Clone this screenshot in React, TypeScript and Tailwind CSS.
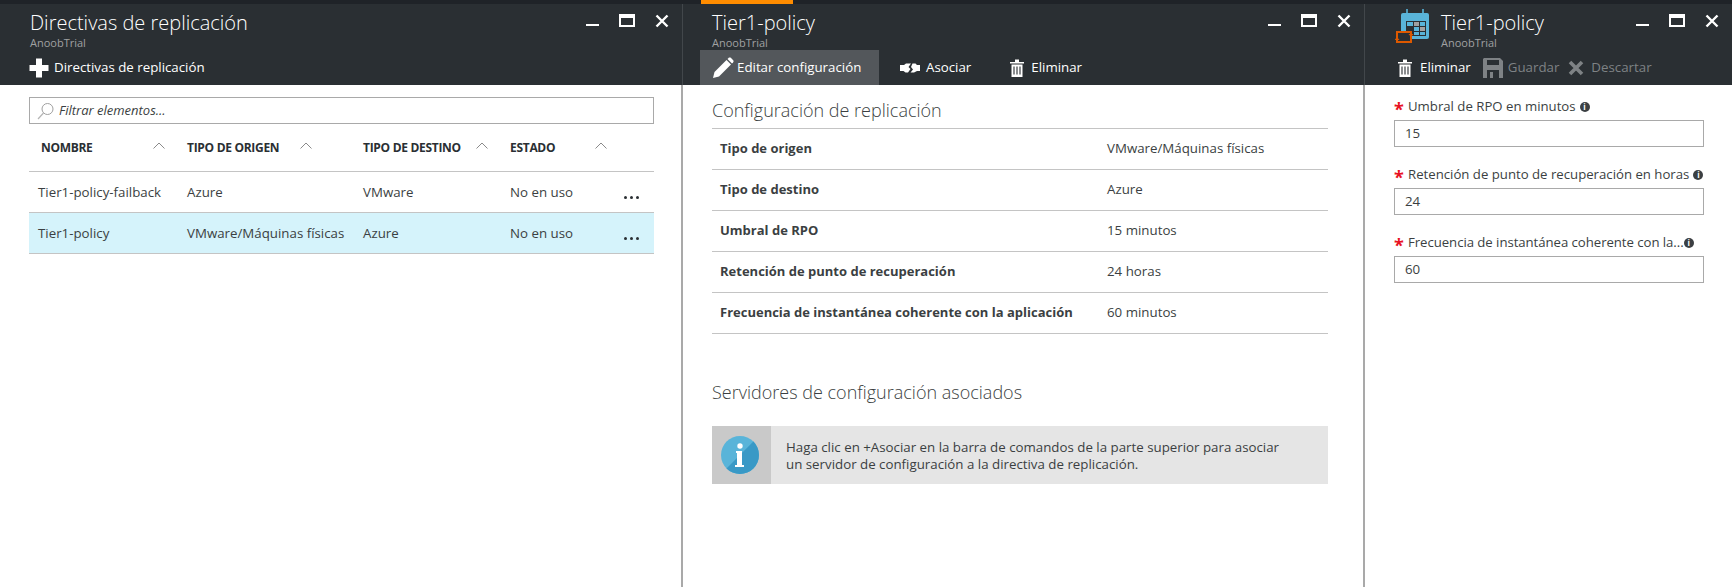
import React from "react";

const font = { fontFamily: '"Open Sans", "Noto Sans", sans-serif' };

const Minimize = () => <div className="w-[13px] h-[2px] bg-white mt-[10px]" />;
const Maximize = () => <div className="w-[16px] h-[13px] border-2 border-t-[4px] border-white" />;
const Close = () => (
  <svg width="14" height="14" viewBox="0 0 14 14">
    <path d="M1.500 1.500 L12.500 12.500 M12.500 1.500 L1.500 12.500" stroke="white" strokeWidth="2.400" fill="none" />
  </svg>
);

const WindowControls = ({ className }: { className: string }) => (
  <div className={"flex items-start gap-[20px] " + className}>
    <Minimize />
    <Maximize />
    <Close />
  </div>
);

const Plus = () => (
  <svg width="22" height="22" viewBox="0 0 22 22">
    <path d="M8 1.500h6V8h6.500v6H14v6.500H8V14H1.500V8H8z" fill="white" />
  </svg>
);

const Pencil = () => (
  <svg width="22" height="22" viewBox="0 0 22 22">
    <path d="M1 21l1.500-6L14.500 3l4.500 4.500L7 19.500z" fill="white" />
    <path d="M15.500 2l1.300-1.200c.6-.5 1.400-.5 2 0l2.400 2.400c.5.6.5 1.400 0 2L20 6.500z" fill="white" />
  </svg>
);

const Link = () => (
  <svg width="20" height="14" viewBox="0 0 20 14">
    <path d="M0 4h4l2-1.500h5L8.500 6l2 2 -2.500 3.500H5.500L3.500 10H0z" fill="white" />
    <path d="M12.500 2.500h3L17 4h3v6h-3l-3 1.500h-3.500L13 8.500 11 6z" fill="white" />
  </svg>
);

const Trash = () => (
  <svg width="14" height="18" viewBox="0 0 14 18">
    <path d="M0 3h14v1.500H0zM5 0.500h4V3H5z" fill="white" />
    <path d="M1.500 5.500h11V18h-11z" fill="white" />
    <path d="M4 7.500v8M7 7.500v8M10 7.500v8" stroke="#2a2f33" strokeWidth="1.100" />
  </svg>
);

const Save = () => (
  <svg width="20" height="20" viewBox="0 0 20 20">
    <path d="M1 0h16l3 3v17H0V1z" fill="#7e8285" />
    <path d="M4 2h12v5H4zM4 12h12v8H4z" fill="#2a2f33" />
    <path d="M7 14h3v6H7z" fill="#7e8285" />
  </svg>
);

const Discard = () => (
  <svg width="16" height="16" viewBox="0 0 16 16">
    <path d="M2 2 L14 14 M14 2 L2 14" stroke="#7e8285" strokeWidth="3.600" fill="none" />
  </svg>
);

const CalendarSync = () => (
  <svg width="36" height="36" viewBox="0 0 36 36">
    <rect x="6" y="4" width="28" height="26" rx="2" fill="#59b4d9" />
    <path d="M12 0v6M28 0v6" stroke="#59b4d9" strokeWidth="1.600" />
    <path d="M11 12h20v15H11z" fill="#2a2f33" />
    <path d="M12 13h6v4h-6z" fill="#59b4d9" />
    <path d="M19 13h5v4h-5z" fill="#a0a1a2" />
    <path d="M25 13h5v4h-5z" fill="#59b4d9" />
    <path d="M12 18h6v4h-6z" fill="#2a2f33" />
    <path d="M19 18h5v4h-5z" fill="#59b4d9" />
    <path d="M25 18h5v4h-5z" fill="#a0a1a2" />
    <path d="M19 23h5v3h-5z" fill="#59b4d9" />
    <path d="M25 23h5v3h-5z" fill="#59b4d9" />
    <path d="M2 23h14v10H2z" fill="#2a2f33" stroke="#dd5900" strokeWidth="2" />
    <path d="M16 28l2.500-3h-5zM2 28l-2.500 3h5z" fill="#dd5900" />
  </svg>
);

const SmallInfo = () => (
  <span className="w-[10px] h-[10px] rounded-full bg-[#3b3f42] text-white text-[8px] leading-[10px] font-bold text-center inline-block shrink-0">
    i
  </span>
);

const Command = ({
  icon,
  label,
  active,
  disabled,
  className,
}: {
  icon: React.ReactNode;
  label: string;
  active?: boolean;
  disabled?: boolean;
  className?: string;
}) => (
  <div
    className={
      "h-[35px] flex items-center text-[13.3px] " +
      (active ? "bg-[#53575b] " : "") +
      (disabled ? "text-[#7e8285] " : "text-white ") +
      (className || "")
    }
  >
    {icon}
    <span>{label}</span>
  </div>
);

const Header = ({
  title,
  icon,
  children,
  controls,
  width,
}: {
  title: string;
  icon?: React.ReactNode;
  children: React.ReactNode;
  controls: string;
  width: string;
}) => (
  <div className={"h-[81px] bg-[#2a2f33] shrink-0 flex flex-col " + width}>
    <div className="h-[46px] flex items-start">
      {icon}
      <div className="flex-1 pt-[5px]">
        <div className="text-[20px] leading-[27px] font-light text-white">{title}</div>
        <div className="text-[11px] leading-[14px] text-[#a0a1a2]">AnoobTrial</div>
      </div>
      <WindowControls className={controls} />
    </div>
    <div className="flex items-end flex-1">{children}</div>
  </div>
);

const rows = [
  ["Tier1-policy-failback", "Azure", "VMware", "No en uso"],
  ["Tier1-policy", "VMware/Máquinas físicas", "Azure", "No en uso"],
];

const details = [
  ["Tipo de origen", "VMware/Máquinas físicas"],
  ["Tipo de destino", "Azure"],
  ["Umbral de RPO", "15 minutos"],
  ["Retención de punto de recuperación", "24 horas"],
  ["Frecuencia de instantánea coherente con la aplicación", "60 minutos"],
];

const fields = [
  { label: "Umbral de RPO en minutos", value: "15", text: "mr-[4px]" },
  { label: "Retención de punto de recuperación en horas", value: "24", text: "mr-[4px]" },
  { label: "Frecuencia de instantánea coherente con la...", value: "60", text: "tracking-[-0.05px]" },
];

const columns = [
  { name: "NOMBRE", col: "w-[146px]", inner: "w-[124px]" },
  { name: "TIPO DE ORIGEN", col: "w-[176px]", inner: "w-[125px]" },
  { name: "TIPO DE DESTINO", col: "w-[147px]", inner: "w-[125px]" },
  { name: "ESTADO", col: "w-[110px]", inner: "w-[97px]" },
];

const Caret = () => (
  <svg width="12" height="7" viewBox="0 0 12 7" className="shrink-0 mb-[4px]">
    <path d="M0.500 6.500L6 1l5.500 5.500" stroke="#8a8a8a" fill="none" />
  </svg>
);

const App = () => {
  return (
    <div className="w-[1732px] h-[587px] overflow-hidden bg-white flex flex-col" style={font}>
      <div className="h-[4px] bg-[#1f2328] shrink-0 pl-[701px]">
        <div className="h-[4px] w-[92px] bg-[#ff8c00]" />
      </div>
      <div className="flex flex-1">
        {/* first blade */}
        <div className="w-[683px] shrink-0 flex flex-col">
          <Header title="Directivas de replicación" controls="pr-[13px] pt-[10px]" width="pl-[30px] pr-0 border-r border-[#42474b]">
            <Command icon={<Plus />} label="Directivas de replicación" className="gap-[4px] -ml-[2px]" />
          </Header>
          <div className="flex-1 border-r-2 border-[#a9a9a9] pl-[29px] pr-[27px] pt-[12px]">
            <div className="h-[27px] border border-[#a9a9a9] flex items-center pl-[7px] gap-[4px] text-[13px] italic text-[#3b3f42]">
              <svg width="18" height="18" viewBox="0 0 18 18">
                <circle cx="10.500" cy="7" r="5.500" stroke="#a0a0a0" fill="none" />
                <path d="M6.500 11L1 17" stroke="#b5b5b5" strokeWidth="1.200" />
              </svg>
              <span>Filtrar elementos...</span>
            </div>
            <div className="h-[48px] flex items-center pl-[12px] text-[12px] font-bold text-[#2a2f33] border-b border-[#c4c4c4]">
              {columns.map((c) => (
                <div key={c.name} className={"shrink-0 " + c.col}>
                  <div className={"flex items-center justify-between " + c.inner}>
                    <span className="whitespace-nowrap tracking-[-0.3px]">{c.name}</span>
                    <Caret />
                  </div>
                </div>
              ))}
            </div>
            {rows.map((r, i) => (
              <div
                key={r[0]}
                className={
                  "h-[41px] flex items-center pl-[9px] pt-[1px] text-[13.3px] text-[#3b3f42] border-b border-[#c4c4c4] " +
                  (i === 1 ? "bg-[#d5f3fb]" : "")
                }
              >
                <div className="w-[149px]">{r[0]}</div>
                <div className="w-[176px]">{r[1]}</div>
                <div className="w-[147px]">{r[2]}</div>
                <div className="w-[114px]">{r[3]}</div>
                <div className="flex gap-[3px] mt-[10px]">
                  <div className="w-[3px] h-[3px] rounded-full bg-[#2a2f33]" />
                  <div className="w-[3px] h-[3px] rounded-full bg-[#2a2f33]" />
                  <div className="w-[3px] h-[3px] rounded-full bg-[#2a2f33]" />
                </div>
              </div>
            ))}
          </div>
        </div>

        {/* second blade */}
        <div className="w-[682px] shrink-0 flex flex-col">
          <Header title="Tier1-policy" controls="pr-[13px] pt-[10px]" width="pl-[29px] border-r border-[#42474b]">
            <Command
              icon={<Pencil />}
              label="Editar configuración"
              active
              className="-ml-[12px] w-[179px] pl-[12px] gap-[3px]"
            />
            <Command icon={<Link />} label="Asociar" className="ml-[21px] gap-[6px]" />
            <Command icon={<Trash />} label="Eliminar" className="ml-[39px] gap-[7px]" />
          </Header>
          <div className="flex-1 border-r-2 border-[#a9a9a9] pl-[29px] pr-[35px]">
            <div className="h-[44px] flex items-end pb-[6px] text-[18px] leading-[24px] font-light text-[#3b3f42] border-b border-[#c4c4c4]">
              Configuración de replicación
            </div>
            {details.map((d) => (
              <div key={d[0]} className="h-[41px] flex items-center pl-[8px] text-[13.3px] text-[#3b3f42] border-b border-[#c4c4c4]">
                <div className="w-[387px] font-bold text-[13px]">{d[0]}</div>
                <div>{d[1]}</div>
              </div>
            ))}
            <div className="mt-[46px] text-[18px] leading-[24px] font-light text-[#3b3f42]">Servidores de configuración asociados</div>
            <div className="mt-[22px] h-[58px] flex bg-[#e5e5e5]">
              <div className="w-[59px] bg-[#c9c9c9] flex items-center pl-[9px]">
                <svg width="38" height="38" viewBox="0 0 38 38">
                  <circle cx="19" cy="19" r="19" fill="#59b4d9" />
                  <path d="M32.400 5.500A19 19 0 0 1 5.500 32.400z" fill="#3999c6" />
                  <circle cx="19" cy="10" r="2.700" fill="white" />
                  <path d="M15 15h6v14h2v2h-9v-2h2V17h-1z" fill="white" />
                </svg>
              </div>
              <div className="pl-[15px] pt-[13px] text-[13.3px] leading-[17px] text-[#3b3f42]">
                <div>Haga clic en +Asociar en la barra de comandos de la parte superior para asociar</div>
                <div>un servidor de configuración a la directiva de replicación.</div>
              </div>
            </div>
          </div>
        </div>

        {/* third blade */}
        <div className="flex-1 flex flex-col">
          <Header
            title="Tier1-policy"
            icon={<div className="mt-[5px] mr-[10px] -ml-[1px]"><CalendarSync /></div>}
            controls="pr-[13px] pt-[10px]"
            width="pl-[31px]"
          >
            <Command icon={<Trash />} label="Eliminar" className="ml-[2px] gap-[8px]" />
            <Command icon={<Save />} label="Guardar" disabled className="ml-[12px] gap-[5px]" />
            <Command icon={<Discard />} label="Descartar" disabled className="ml-[9px] gap-[7px]" />
          </Header>
          <div className="flex-1 pl-[29px] pr-[28px] pt-[13px]">
            {fields.map((f) => (
              <div key={f.label} className="mb-[19px]">
                <div className="h-[18px] flex items-center text-[13.2px] text-[#3b3f42] mb-[4px]">
                  <span className="text-[#e81123] w-[14px] text-[18px] font-bold leading-[18px] pt-[3px]">*</span>
                  <span className={"whitespace-nowrap " + f.text}>{f.label}</span>
                  <SmallInfo />
                </div>
                <div className="h-[27px] border border-[#a9a9a9] flex items-center pl-[10px] text-[13.3px] text-[#3b3f42]">{f.value}</div>
              </div>
            ))}
          </div>
        </div>
      </div>
    </div>
  );
};

export default App;
